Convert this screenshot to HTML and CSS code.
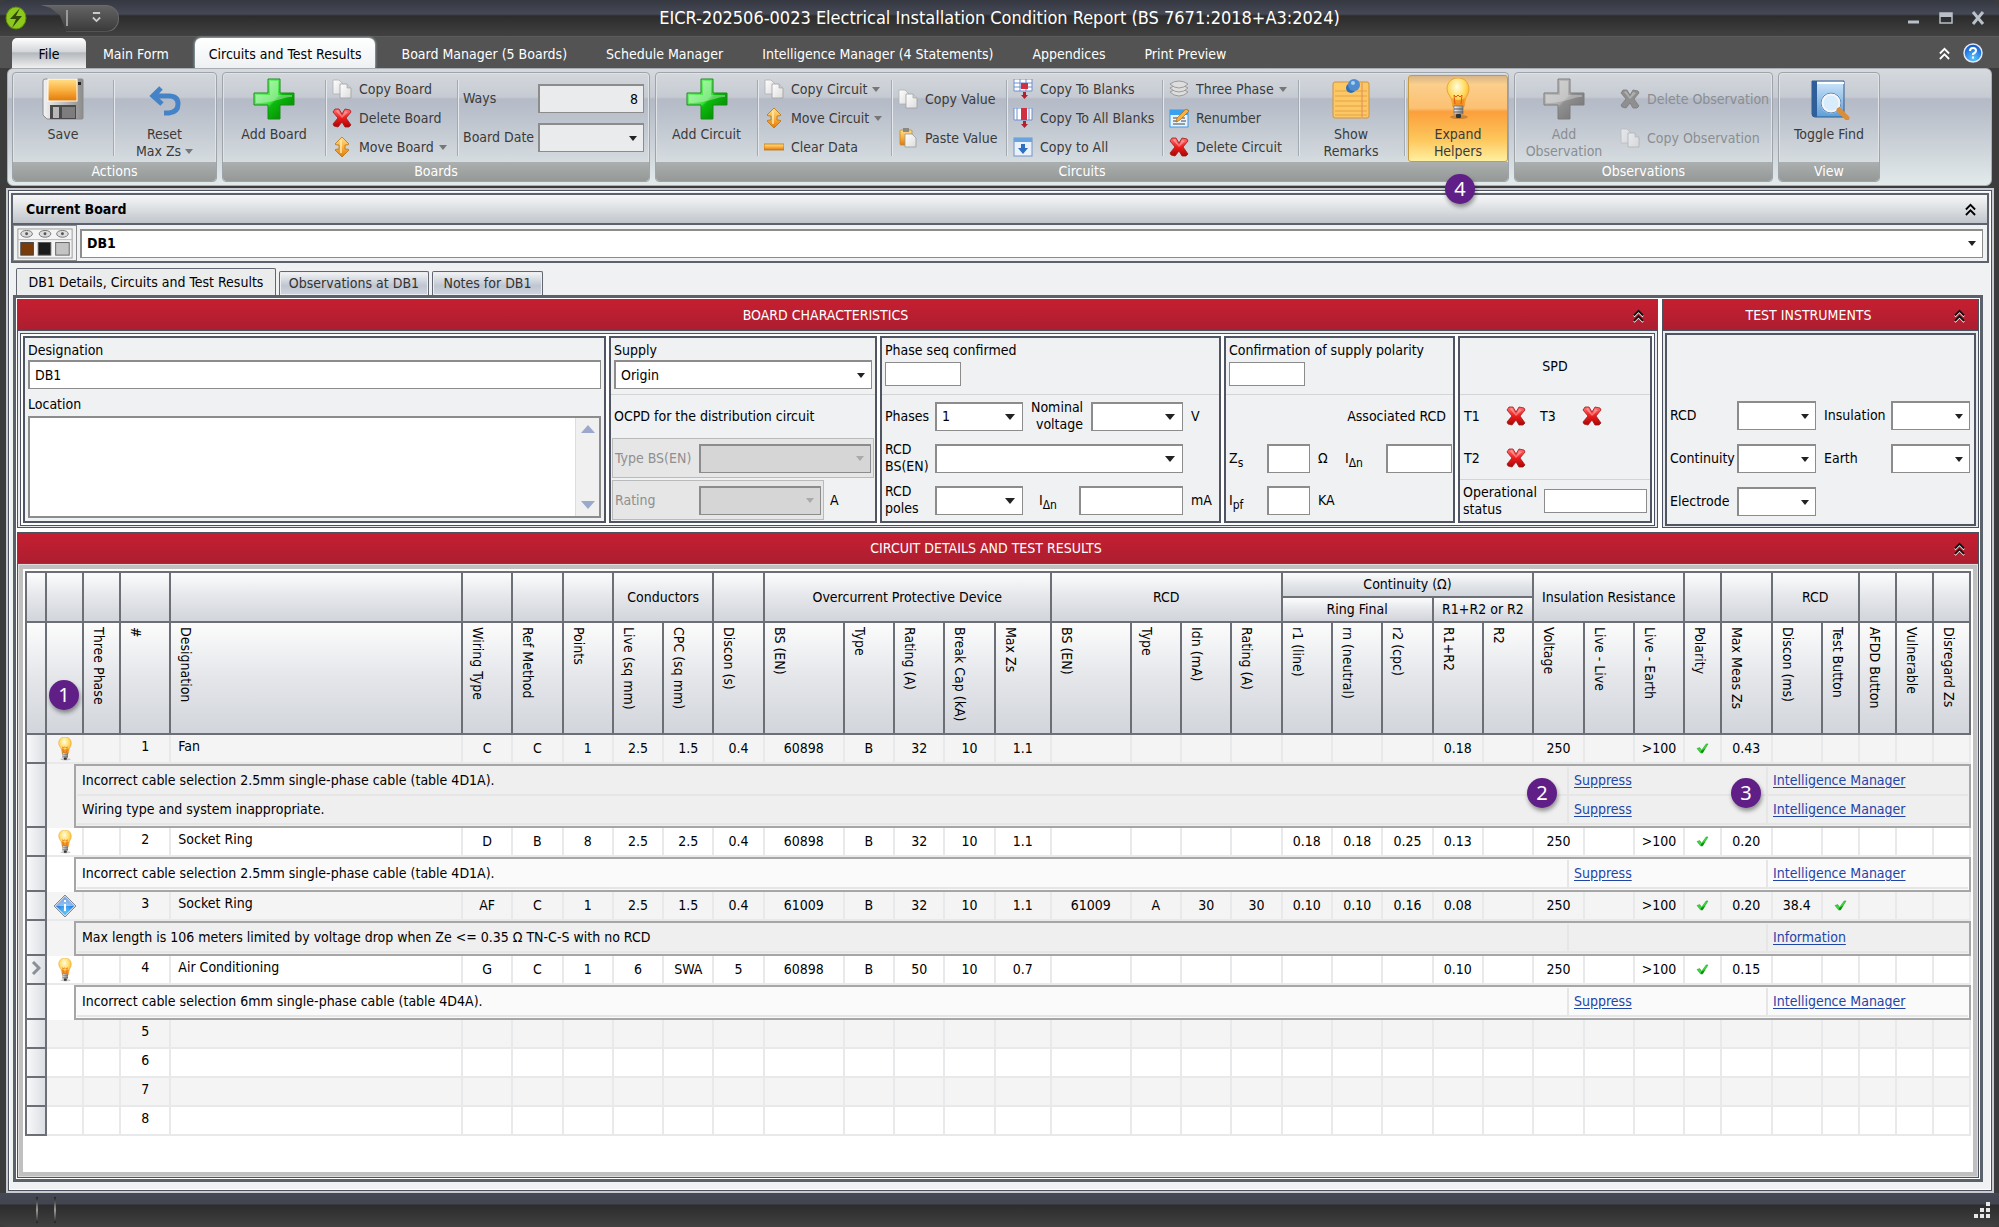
FILE: index.html
```html
<!DOCTYPE html>
<html lang="en">
<head>
    <meta charset="UTF-8">
    <meta name="viewport" content="width=device-width, initial-scale=1.0">
    <title>EICR-202506-0023 Electrical Installation Condition Report</title>
    <link rel="stylesheet" href="styles.css">
</head>
<body>
    <!-- icon set -->
    <svg class="icon-defs" width="0" height="0">
        <defs>
            <linearGradient id="gGreen" x1="0" y1="0" x2="1" y2="1"><stop offset="0" stop-color="#8dff8d"/><stop offset=".5" stop-color="#3fe03f"/><stop offset=".55" stop-color="#0cba0c"/><stop offset="1" stop-color="#007a00"/></linearGradient>
            <linearGradient id="gGrey" x1="0" y1="0" x2="1" y2="1"><stop offset="0" stop-color="#c4c4c4"/><stop offset=".5" stop-color="#acacac"/><stop offset=".55" stop-color="#8f8f8f"/><stop offset="1" stop-color="#6f6f6f"/></linearGradient>
            <linearGradient id="gRed" x1="0" y1="0" x2="0" y2="1"><stop offset="0" stop-color="#ff7474"/><stop offset=".5" stop-color="#ee1c1c"/><stop offset="1" stop-color="#a80606"/></linearGradient>
            <linearGradient id="gGold" x1="0" y1="0" x2="0" y2="1"><stop offset="0" stop-color="#ffe08a"/><stop offset=".5" stop-color="#fbb040"/><stop offset="1" stop-color="#e07a08"/></linearGradient>
            <linearGradient id="gPage" x1="0" y1="0" x2="1" y2="1"><stop offset="0" stop-color="#ffffff"/><stop offset="1" stop-color="#dcdcdc"/></linearGradient>
            <linearGradient id="gBlue" x1="0" y1="0" x2="0" y2="1"><stop offset="0" stop-color="#cfe6fa"/><stop offset="1" stop-color="#5d9fd8"/></linearGradient>
            <linearGradient id="gMetal" x1="0" y1="0" x2="1" y2="0"><stop offset="0" stop-color="#f4f4f4"/><stop offset="1" stop-color="#8c8c8c"/></linearGradient>
            <radialGradient id="gBulb" cx=".45" cy=".3" r=".8"><stop offset="0" stop-color="#fffde0"/><stop offset=".5" stop-color="#ffd95a"/><stop offset="1" stop-color="#f08a10"/></radialGradient>
            <radialGradient id="gHelp" cx=".5" cy=".8" r=".8"><stop offset="0" stop-color="#5ac8ff"/><stop offset="1" stop-color="#0a4ed0"/></radialGradient>
        </defs>
        <symbol id="i-plus" viewBox="0 0 42 42"><path d="M15 1h12v14h14v12H27v14H15V27H1V15h14z" fill="url(#gGreen)" stroke="#1a8a1a"/><path d="M17 3h8v14h14v2C28 19 24 25 3 25v-8h14z" fill="#fff" opacity=".35"/></symbol>
        <symbol id="i-plus-grey" viewBox="0 0 42 42"><path d="M15 1h12v14h14v12H27v14H15V27H1V15h14z" fill="url(#gGrey)" stroke="#7c7c7c"/><path d="M17 3h8v14h14v2C28 19 24 25 3 25v-8h14z" fill="#fff" opacity=".3"/></symbol>
        <symbol id="i-save" viewBox="0 0 42 42"><path d="M1 3q0-2 2-2h37q1 0 1 1v38q0 1-1 1H5l-4-4z" fill="url(#gMetal)" stroke="#8a8a8a"/><rect x="6" y="1" width="29" height="22" fill="url(#gGold)" stroke="#fff"/><rect x="8" y="27" width="26" height="14" fill="#4a4a4a"/><rect x="11" y="29" width="6" height="11" fill="#b8b8b8"/><rect x="20" y="29" width="13" height="11" fill="#7d7d7d"/><rect x="36" y="4" width="3" height="3" fill="#222"/></symbol>
        <symbol id="i-undo" viewBox="0 0 34 30"><path d="M13 2L5 10l9 8M6 10h15q9 0 9 8t-9 9h-5" fill="none" stroke="#4583c8" stroke-width="5"/></symbol>
        <symbol id="i-copy" viewBox="0 0 20 20"><path d="M1 1h6l4 4v10H1z" fill="url(#gPage)" stroke="#b0b0b0" stroke-width=".8"/><path d="M8 5h7l4 4v10H8z" fill="url(#gPage)" stroke="#a0a0a0" stroke-width=".8"/><path d="M15 5v4h4" fill="#ccc" stroke="#a0a0a0" stroke-width=".6"/></symbol>
        <symbol id="i-paste" viewBox="0 0 20 20"><rect x="2" y="2" width="12" height="15" rx="1" fill="url(#gGold)" stroke="#b98a3a" stroke-width=".8"/><rect x="5" y="0" width="6" height="4" fill="#888"/><path d="M7 6h7l4 4v9H7z" fill="url(#gPage)" stroke="#999" stroke-width=".8"/></symbol>
        <symbol id="i-x" viewBox="0 0 20 20"><path d="M3 1h4l3 5 3-5 5 1 1 2-5 6 5 7-2 2h-4l-3-5-4 5-4-1-1-2 5-6-5-6z" fill="url(#gRed)" stroke="#a31515" stroke-width=".8"/><path d="M4 3l2-1 4 6 3-5 3 1-6 6z" fill="#fff" opacity=".35"/></symbol>
        <symbol id="i-x-grey" viewBox="0 0 20 20"><path d="M3 1h4l3 5 3-5 5 1 1 2-5 6 5 7-2 2h-4l-3-5-4 5-4-1-1-2 5-6-5-6z" fill="#8f8f8f" stroke="#7c7c7c" stroke-width=".8"/><path d="M4 3l2-1 4 6 3-5 3 1-6 6z" fill="#fff" opacity=".3"/></symbol>
        <symbol id="i-move" viewBox="0 0 20 20"><path d="M10 0l7 7q0 1-4 1v4q4 0 4 1l-7 7-7-7q0-1 4-1V8q-4 0-4-1z" fill="url(#gGold)" stroke="#b87410" stroke-width=".8"/><path d="M9 3v13" stroke="#fff0b8" stroke-width="2" opacity=".7"/></symbol>
        <symbol id="i-minus" viewBox="0 0 20 20"><rect x="0" y="7" width="20" height="6" fill="url(#gGold)" stroke="#b87410" stroke-width=".8"/></symbol>
        <symbol id="i-blanks" viewBox="0 0 20 20"><path d="M1 0h18v12H1z" fill="#fff" stroke="#6f8fd0"/><path d="M7 0v12M13 0v12M1 4h18M1 8h18" stroke="#6f8fd0"/><rect x="8" y="4" width="7" height="6" fill="#d03040"/><path d="M10 13h3v3h2l-3.500 4L8 16h2z" fill="#b02030"/></symbol>
        <symbol id="i-allblanks" viewBox="0 0 20 20"><path d="M1 0h18v12H1z" fill="#fff" stroke="#6f8fd0"/><path d="M4 0v12M16 0v12" stroke="#6f8fd0"/><rect x="8" y="0" width="6" height="12" fill="#d03040"/><path d="M10 13h3v3h2l-3.500 4L8 16h2z" fill="#b02030"/></symbol>
        <symbol id="i-toall" viewBox="0 0 20 20"><rect x="1" y="1" width="18" height="18" fill="#e9f1fb" stroke="#7494c4"/><rect x="1" y="1" width="18" height="4" fill="#6aa4e0"/><path d="M8 7h4v4h3l-5 6-5-6h3z" fill="#2f6fc0"/></symbol>
        <symbol id="i-layers" viewBox="0 0 20 20"><g fill="#dedede" stroke="#8c8c8c" stroke-width=".8"><path d="M1 13q4-3 9-3t9 3q-4 4-9 4t-9-4z"/><path d="M1 9q4-3 9-3t9 3q-4 4-9 4T1 9z"/><path d="M1 5q4-3 9-3t9 3q-4 4-9 4T1 5z"/></g></symbol>
        <symbol id="i-renumber" viewBox="0 0 20 20"><rect x="1" y="2" width="18" height="17" fill="#e8f3fd" stroke="#3a9ae8"/><rect x="1" y="2" width="18" height="5" fill="#3aa0f0"/><path d="M4 10h5M4 13h5M4 16h12M12 13h5M13 10h3" stroke="#444"/><path d="M7 14l1-4 9-9 3 2-9 9z" fill="#fbb040" stroke="#a86a10" stroke-width=".7"/></symbol>
        <symbol id="i-note" viewBox="0 0 42 42"><rect x="3" y="4" width="36" height="36" rx="2" fill="#fcc765" stroke="#d3923a"/><path d="M5 13h32M5 18h32M5 23h32M5 28h32M5 33h32M5 37h32" stroke="#e5a443"/><path d="M32 5v34" stroke="#e58a60"/><circle cx="21" cy="10" r="5" fill="#2f6fb8"/><circle cx="24" cy="7" r="6" fill="#4f8dd0"/><circle cx="23" cy="5" r="2" fill="#a8d0f4"/></symbol>
        <symbol id="i-bulb" viewBox="0 0 24 42"><ellipse cx="13" cy="39" rx="9" ry="2" fill="#000" opacity=".2"/><path d="M12 0c7 0 11 5 11 11 0 5-3 7-4 12l-1 6H7l-1-6C5 18 1 16 1 11 1 5 5 0 12 0z" fill="url(#gBulb)" stroke="#e79a2b" stroke-width=".8"/><path d="M6 20q6 4 13 0l-2 8H8z" fill="#f07a10" opacity=".6"/><path d="M9 26l-1-9 2 2 2-2 2 2 2-2-1 9" fill="none" stroke="#e05a10"/><rect x="8" y="28" width="9" height="8" fill="url(#gMetal)" stroke="#666" stroke-width=".6"/><path d="M8 31h9M8 34h9" stroke="#555"/><rect x="10" y="36" width="5" height="4" rx="1" fill="#333"/></symbol>
        <symbol id="i-find" viewBox="0 0 42 42"><path d="M4 3h32v36H7q-3 0-3-3z" fill="url(#gBlue)" stroke="#2c5c92"/><path d="M4 3h5v36q-5 0-5-3z" fill="#2f5f98"/><path d="M9 5h27" stroke="#fff" stroke-width="2"/><circle cx="23" cy="25" r="9" fill="#d8ecfb" stroke="#f2f6fa" stroke-width="3"/><circle cx="23" cy="25" r="10" fill="none" stroke="#5a88b8" stroke-width="1"/><path d="M31 32l8 8" stroke="#d98e3c" stroke-width="5" stroke-linecap="round"/></symbol>
        <symbol id="i-tick" viewBox="0 0 14 12"><path d="M1 6l3-1 2 3 5-7 2 0-6 10H5z" fill="#3fd83f" stroke="#0c9a0c" stroke-width=".5"/><path d="M5 9l1 2h1l3-5z" fill="#0a8a0a"/></symbol>
        <symbol id="i-info" viewBox="0 0 24 24"><path d="M12 1l11 11-11 11L1 12z" fill="#cfd8df" stroke="#7c8a96"/><path d="M12 3l9 9-9 9-9-9z" fill="url(#gHelp)"/><path d="M12 3l9 9H3z" fill="#fff" opacity=".45"/><path d="M12 6v2M12 10v7" stroke="#fff" stroke-width="2"/></symbol>
        <symbol id="i-chev2" viewBox="0 0 12 14"><path d="M1 7l5-5 5 5M1 13l5-5 5 5" fill="none" stroke="currentColor" stroke-width="2"/></symbol>
        <symbol id="i-bolt" viewBox="0 0 22 24"><ellipse cx="11" cy="12" rx="10" ry="11" fill="#8fc81c" stroke="#5a8a10"/><path d="M15 2L5 13h6L7 22l10-12h-6z" fill="#2f4a08"/></symbol>
        <symbol id="i-help" viewBox="0 0 20 20"><circle cx="10" cy="10" r="9" fill="url(#gHelp)" stroke="#dfe8f5" stroke-width="1.500"/><path d="M7 8q0-3 3-3t3 2.500q0 2-3 3.500v1M10 13.500v2" fill="none" stroke="#fff" stroke-width="2"/></symbol>
        <symbol id="i-board" viewBox="0 0 58 32"><rect x="1" y="1" width="56" height="30" fill="#f4f4f4" stroke="#9a9a9a"/><path d="M1 12h56" stroke="#b8b8b8"/><g fill="#ddd" stroke="#777"><ellipse cx="10" cy="6" rx="6" ry="3.500"/><ellipse cx="29" cy="6" rx="6" ry="3.500"/><ellipse cx="47" cy="6" rx="6" ry="3.500"/></g><g fill="#555"><circle cx="10" cy="6" r="1.500"/><circle cx="29" cy="6" r="1.500"/><circle cx="47" cy="6" r="1.500"/></g><rect x="4" y="15" width="13" height="13" fill="#7a3c08" stroke="#444"/><rect x="22" y="15" width="13" height="13" fill="#1c1c1c" stroke="#555"/><rect x="40" y="15" width="14" height="13" fill="#c4c4c4" stroke="#666"/></symbol>
    </svg>

    <div class="window">
        <header class="title-bar">
            <svg class="app-icon"><use href="#i-bolt"/></svg>
            <div class="quick-access">
                <span class="qa-divider"></span>
                <button class="qa-btn" aria-label="Customise toolbar"><svg width="9" height="11" viewBox="0 0 10 12"><path d="M1 1h8M1 6l4 4 4-4" fill="none" stroke="#ccc" stroke-width="2"/></svg></button>
            </div>
            <h1 class="window-title">EICR-202506-0023 Electrical Installation Condition Report (BS 7671:2018+A3:2024)</h1>
            <div class="window-buttons">
                <button aria-label="Minimise"><svg width="14" height="14" viewBox="0 0 14 14"><path d="M1 11h11" stroke="#b8c0ca" stroke-width="3"/></svg></button>
                <button aria-label="Maximise"><svg width="14" height="14" viewBox="0 0 14 14"><path d="M1 2h12v10H1z" fill="none" stroke="#b8c0ca" stroke-width="1.500"/><path d="M1 4h12" stroke="#b8c0ca" stroke-width="4"/></svg></button>
                <button aria-label="Close"><svg width="14" height="14" viewBox="0 0 14 14"><path d="M2 1l10 12M12 1L2 13" stroke="#b8c0ca" stroke-width="3"/></svg></button>
            </div>
        </header>

        <nav class="ribbon-tabs">
            <button class="ribbon-tab file-tab">File</button>
            <button class="ribbon-tab tab-form">Main Form</button>
            <button class="ribbon-tab active">Circuits and Test Results</button>
            <button class="ribbon-tab">Board Manager (5 Boards)</button>
            <button class="ribbon-tab">Schedule Manager</button>
            <button class="ribbon-tab">Intelligence Manager (4 Statements)</button>
            <button class="ribbon-tab">Appendices</button>
            <button class="ribbon-tab">Print Preview</button>
            <div class="ribbon-tools">
                <svg class="chev"><use href="#i-chev2"/></svg>
                <svg class="help-icon"><use href="#i-help"/></svg>
            </div>
        </nav>

        <section class="ribbon">
            <div class="ribbon-group">
                <div class="group-body cols-actions">
                    <button class="big-btn"><svg class="ico-big"><use href="#i-save"/></svg><span>Save</span></button>
                    <button class="big-btn divided"><svg class="ico-big undo"><use href="#i-undo"/></svg><span>Reset<br>Max Zs <i class="arrow"></i></span></button>
                </div>
                <div class="group-caption">Actions</div>
            </div>

            <div class="ribbon-group">
                <div class="group-body cols-boards">
                    <button class="big-btn"><svg class="ico-big"><use href="#i-plus"/></svg><span>Add Board</span></button>
                    <div class="btn-col divided">
                        <button><svg><use href="#i-copy"/></svg>Copy Board</button>
                        <button><svg><use href="#i-x"/></svg>Delete Board</button>
                        <button><svg><use href="#i-move"/></svg>Move Board <i class="arrow"></i></button>
                    </div>
                    <div class="field-col divided">
                        <label for="ways">Ways</label><input id="ways" class="ribbon-input" value="8">
                        <label for="boardDate">Board Date</label><select id="boardDate" class="ribbon-input"><option></option></select>
                    </div>
                </div>
                <div class="group-caption">Boards</div>
            </div>

            <div class="ribbon-group">
                <div class="group-body cols-circuits">
                    <button class="big-btn"><svg class="ico-big"><use href="#i-plus"/></svg><span>Add Circuit</span></button>
                    <div class="btn-col divided">
                        <button><svg><use href="#i-copy"/></svg>Copy Circuit <i class="arrow"></i></button>
                        <button><svg><use href="#i-move"/></svg>Move Circuit <i class="arrow"></i></button>
                        <button><svg><use href="#i-minus"/></svg>Clear Data</button>
                    </div>
                    <div class="btn-col two divided">
                        <button><svg><use href="#i-copy"/></svg>Copy Value</button>
                        <button><svg><use href="#i-paste"/></svg>Paste Value</button>
                    </div>
                    <div class="btn-col divided">
                        <button><svg><use href="#i-blanks"/></svg>Copy To Blanks</button>
                        <button><svg><use href="#i-allblanks"/></svg>Copy To All Blanks</button>
                        <button><svg><use href="#i-toall"/></svg>Copy to All</button>
                    </div>
                    <div class="btn-col divided">
                        <button><svg><use href="#i-layers"/></svg>Three Phase <i class="arrow"></i></button>
                        <button><svg><use href="#i-renumber"/></svg>Renumber</button>
                        <button><svg><use href="#i-x"/></svg>Delete Circuit</button>
                    </div>
                    <button class="big-btn divided"><svg class="ico-big"><use href="#i-note"/></svg><span>Show<br>Remarks</span></button>
                    <div class="helpers-cell divided">
                        <button class="big-btn pressed"><svg class="ico-big"><use href="#i-bulb"/></svg><span>Expand<br>Helpers</span></button>
                        <span class="callout callout-ribbon">4</span>
                    </div>
                </div>
                <div class="group-caption">Circuits</div>
            </div>

            <div class="ribbon-group">
                <div class="group-body cols-observations">
                    <button class="big-btn" disabled><svg class="ico-big"><use href="#i-plus-grey"/></svg><span>Add<br>Observation</span></button>
                    <div class="btn-col two">
                        <button disabled><svg><use href="#i-x-grey"/></svg>Delete Observation</button>
                        <button disabled><svg class="faded"><use href="#i-copy"/></svg>Copy Observation</button>
                    </div>
                </div>
                <div class="group-caption">Observations</div>
            </div>

            <div class="ribbon-group">
                <div class="group-body cols-view">
                    <button class="big-btn"><svg class="ico-big"><use href="#i-find"/></svg><span>Toggle Find</span></button>
                </div>
                <div class="group-caption">View</div>
            </div>
        </section>

        <main class="client">
            <section class="current-board">
                <div class="current-board-head">
                    <h2>Current Board</h2>
                    <svg class="chev"><use href="#i-chev2"/></svg>
                </div>
                <div class="current-board-body">
                    <div class="board-pic"><svg><use href="#i-board"/></svg></div>
                    <select class="board-select" aria-label="Current board"><option>DB1</option></select>
                </div>
            </section>

            <div class="page-tabs">
                <button class="page-tab selected">DB1 Details, Circuits and Test Results</button>
                <button class="page-tab">Observations at DB1</button>
                <button class="page-tab">Notes for DB1</button>
            </div>

            <div class="page-body">
                <div class="top-panels">
                    <section class="panel">
                        <div class="panel-head"><h3>BOARD CHARACTERISTICS</h3><svg class="chev"><use href="#i-chev2"/></svg></div>
                        <div class="panel-body">
                            <div class="box box-designation">
                                <label class="top-label" for="designation">Designation</label>
                                <input id="designation" value="DB1">
                                <label class="mid-label" for="location">Location</label>
                                <div class="memo">
                                    <textarea id="location"></textarea>
                                    <div class="memo-scroll">
                                        <svg width="14" height="8" viewBox="0 0 14 8"><path d="M0 8l7-8 7 8z" fill="#9aa8cc"/></svg>
                                        <svg width="14" height="8" viewBox="0 0 14 8"><path d="M0 0l7 8 7-8z" fill="#9aa8cc"/></svg>
                                    </div>
                                </div>
                            </div>

                            <div class="box box-supply">
                                <div class="box-top">
                                    <label class="top-label" for="supply">Supply</label>
                                    <select id="supply"><option>Origin</option></select>
                                </div>
                                <div class="line">OCPD for the distribution circuit</div>
                                <div class="line"><div class="disabled-field"><label for="ocpdType">Type BS(EN)</label><select id="ocpdType" disabled><option></option></select></div></div>
                                <div class="line"><div class="disabled-field rating"><label for="ocpdRating">Rating</label><select id="ocpdRating" disabled><option></option></select></div><span class="unit">A</span></div>
                            </div>

                            <div class="box box-phase">
                                <div class="box-top">
                                    <label class="top-label" for="phaseSeq">Phase seq confirmed</label>
                                    <input id="phaseSeq" class="small-input">
                                </div>
                                <div class="line phase-line">
                                    <label for="phases">Phases</label><select id="phases"><option>1</option></select>
                                    <label class="nominal" for="nominal">Nominal voltage</label><select id="nominal"><option></option></select><span>V</span>
                                </div>
                                <div class="line phase-line">
                                    <label for="rcdBs">RCD BS(EN)</label><select id="rcdBs" class="wide"><option></option></select>
                                </div>
                                <div class="line phase-line poles-line">
                                    <label for="rcdPoles">RCD poles</label><select id="rcdPoles"><option></option></select>
                                    <label class="idn" for="phaseIdn">I<sub>Δn</sub></label><input id="phaseIdn"><span>mA</span>
                                </div>
                            </div>

                            <div class="box box-polarity">
                                <div class="box-top">
                                    <label class="top-label" for="polarity">Confirmation of supply polarity</label>
                                    <input id="polarity" class="small-input">
                                </div>
                                <div class="line line-right">Associated RCD</div>
                                <div class="line zs-line">
                                    <label for="zs">Z<sub>s</sub></label><input id="zs"><span>Ω</span>
                                    <label for="rcdIdn">I<sub>Δn</sub></label><input id="rcdIdn">
                                </div>
                                <div class="line zs-line">
                                    <label for="ipf">I<sub>pf</sub></label><input id="ipf"><span>KA</span>
                                </div>
                            </div>

                            <div class="box box-spd">
                                <div class="box-top spd-title">SPD</div>
                                <div class="line spd-line">
                                    <span>T1</span><button aria-label="T1"><svg><use href="#i-x"/></svg></button>
                                    <span>T3</span><button aria-label="T3"><svg><use href="#i-x"/></svg></button>
                                </div>
                                <div class="line spd-line">
                                    <span>T2</span><button aria-label="T2"><svg><use href="#i-x"/></svg></button>
                                </div>
                                <div class="line spd-status">
                                    <label for="opStatus">Operational status</label><input id="opStatus" class="small-input">
                                </div>
                            </div>
                        </div>
                    </section>

                    <section class="panel instruments">
                        <div class="panel-head"><h3>TEST INSTRUMENTS</h3><svg class="chev"><use href="#i-chev2"/></svg></div>
                        <div class="instruments-body">
                            <label for="tiRcd">RCD</label><select id="tiRcd"><option></option></select>
                            <label class="second" for="tiIns">Insulation</label><select id="tiIns"><option></option></select>
                            <label for="tiCont">Continuity</label><select id="tiCont"><option></option></select>
                            <label class="second" for="tiEarth">Earth</label><select id="tiEarth"><option></option></select>
                            <label for="tiElec">Electrode</label><select id="tiElec"><option></option></select>
                        </div>
                    </section>
                </div>

                <section class="panel results">
                    <div class="panel-head"><h3>CIRCUIT DETAILS AND TEST RESULTS</h3><svg class="chev"><use href="#i-chev2"/></svg></div>
                    <div class="grid-frame">
                        <table class="circuits">
                            <colgroup>
                                <col class="c-ind"><col class="c-narrow"><col class="c-narrow"><col><col class="c-name">
                                <col><col><col><col><col><col>
                                <col class="c-bs"><col><col><col><col class="c-zs">
                                <col class="c-bs"><col><col><col>
                                <col><col><col><col><col><col><col><col>
                                <col class="c-narrow"><col><col>
                                <col class="c-narrow"><col class="c-narrow"><col class="c-narrow"><col class="c-narrow">
                            </colgroup>
                            <thead>
                                <tr class="band">
                                    <th rowspan="2"></th><th rowspan="2"></th><th rowspan="2"></th><th rowspan="2"></th><th rowspan="2"></th><th rowspan="2"></th><th rowspan="2"></th><th rowspan="2"></th>
                                    <th rowspan="2" colspan="2">Conductors</th>
                                    <th rowspan="2"></th>
                                    <th rowspan="2" colspan="5">Overcurrent Protective Device</th>
                                    <th rowspan="2" colspan="4">RCD</th>
                                    <th colspan="5">Continuity (Ω)</th>
                                    <th rowspan="2" colspan="3">Insulation Resistance</th>
                                    <th rowspan="2"></th><th rowspan="2"></th>
                                    <th rowspan="2" colspan="2">RCD</th>
                                    <th rowspan="2"></th><th rowspan="2"></th><th rowspan="2"></th>
                                </tr>
                                <tr class="band">
                                    <th colspan="3">Ring Final</th>
                                    <th colspan="2">R1+R2 or R2</th>
                                </tr>
                                <tr class="heads" id="heads"></tr>
                            </thead>
                            <tbody id="circuitRows"></tbody>
                        </table>
                    </div>
                </section>
            </div>
        </main>

        <footer class="status-bar">
            <span class="status-sep"></span><span class="status-sep"></span>
            <svg class="grip" width="18" height="18" viewBox="0 0 18 18"><g fill="#e8e8e8"><rect x="13" y="1" width="4" height="4"/><rect x="7" y="7" width="4" height="4"/><rect x="13" y="7" width="4" height="4"/><rect x="1" y="13" width="4" height="4"/><rect x="7" y="13" width="4" height="4"/><rect x="13" y="13" width="4" height="4"/></g></svg>
        </footer>
    </div>
    <script src="script.js"></script>
</body>
</html>
```
FILE: script.js
```js
const heads = ['', '', 'Three Phase', '#', 'Designation', 'Wiring Type', 'Ref Method', 'Points',
    'Live (sq mm)', 'CPC (sq mm)', 'Discon (s)', 'BS (EN)', 'Type', 'Rating (A)', 'Break Cap (kA)', 'Max Zs',
    'BS (EN)', 'Type', 'Idn (mA)', 'Rating (A)', 'r1 (line)', 'rn (neutral)', 'r2 (cpc)', 'R1+R2', 'R2',
    'Voltage', 'Live - Live', 'Live - Earth', 'Polarity', 'Max Meas Zs', 'Discon (ms)', 'Test Button',
    'AFDD Button', 'Vulnerable', 'Disregard Zs'];

// values run from Wiring Type to Disregard Zs, "y" is a tick
const circuits = [
    { name: 'Fan', icon: 'bulb', values: 'C|C|1|2.5|1.5|0.4|60898|B|32|10|1.1||||||||0.18||250||>100|y|0.43|||||',
      notes: [['Incorrect cable selection 2.5mm single-phase cable (table 4D1A).', 'Suppress', 'Intelligence Manager', 2, 3],
              ['Wiring type and system inappropriate.', 'Suppress', 'Intelligence Manager']] },
    { name: 'Socket Ring', icon: 'bulb', values: 'D|B|8|2.5|2.5|0.4|60898|B|32|10|1.1|||||0.18|0.18|0.25|0.13||250||>100|y|0.20|||||',
      notes: [['Incorrect cable selection 2.5mm single-phase cable (table 4D1A).', 'Suppress', 'Intelligence Manager']] },
    { name: 'Socket Ring', icon: 'info', values: 'AF|C|1|2.5|1.5|0.4|61009|B|32|10|1.1|61009|A|30|30|0.10|0.10|0.16|0.08||250||>100|y|0.20|38.4|y|||',
      notes: [['Max length is 106 meters limited by voltage drop when Ze <= 0.35 Ω TN-C-S with no RCD', '', 'Information']] },
    { name: 'Air Conditioning', icon: 'bulb', current: true, values: 'G|C|1|6|SWA|5|60898|B|50|10|0.7||||||||0.10||250||>100|y|0.15|||||',
      notes: [['Incorrect cable selection 6mm single-phase cable (table 4D4A).', 'Suppress', 'Intelligence Manager']] },
    {}, {}, {}, {}
];

function esc(text) {
    return text.replace(/</g, '&lt;').replace(/>/g, '&gt;');
}

function link(text) {
    return text ? `<a href="#">${text}</a>` : '';
}

function callout(n, extra) {
    return n ? `<span class="callout ${extra}">${n}</span>` : '';
}

document.getElementById('heads').innerHTML = heads.map((head, i) =>
    `<th>${head ? `<span class="vertical">${head}</span>` : ''}${i === 1 ? callout(1, 'callout-head') : ''}</th>`).join('');

let html = '';
circuits.forEach((circuit, i) => {
    const shade = i % 2 === 0 ? 'odd' : 'even';
    const values = circuit.values ? circuit.values.split('|') : Array(30).fill('');
    const icon = circuit.icon ? `<svg class="row-icon"><use href="#i-${circuit.icon}"/></svg>` : '';
    const pointer = circuit.current ? '<svg width="10" height="14" viewBox="0 0 10 14"><path d="M2 1l6 6-6 6" fill="none" stroke="#8a8f98" stroke-width="3"/></svg>' : '';
    html += `<tr class="circuit ${shade}"><td class="indicator">${pointer}</td><td>${icon}</td><td></td>
        <td class="num">${i + 1}</td><td class="name">${circuit.name || ''}</td>`;
    values.forEach(value => {
        html += `<td>${value === 'y' ? '<svg class="tick"><use href="#i-tick"/></svg>' : esc(value)}</td>`;
    });
    html += '</tr>';

    if (circuit.notes) {
        html += `<tr class="detail ${shade}"><td class="indicator"></td><td colspan="34"><div class="notes">`;
        circuit.notes.forEach(([text, suppress, target, a, b]) => {
            html += `<div class="note"><span>${esc(text)}</span>
                <span>${callout(a, 'callout-suppress')}${link(suppress)}</span>
                <span>${callout(b, 'callout-manager')}${link(target)}</span></div>`;
        });
        html += '</div></td></tr>';
    }
});
document.getElementById('circuitRows').innerHTML = html;
```
FILE: styles.css
```css
* {
    box-sizing: border-box;
}

body {
    margin: 0;
    font-family: "DejaVu Sans Condensed", "DejaVu Sans", Tahoma, sans-serif;
    font-size: 14px;
    line-height: 17px;
    color: #000;
    background-color: #3c3c3c;
}

button, input, select, textarea {
    font: inherit;
    color: inherit;
}

button {
    border: none;
    background: none;
    padding: 0;
    margin: 0;
}

h1, h2, h3 {
    margin: 0;
    font-weight: normal;
    font-size: 14px;
}

.icon-defs {
    position: absolute;
}

.window {
    min-height: 100vh;
    display: flex;
    flex-direction: column;
    border-radius: 8px;
    overflow: hidden;
}

.chev {
    width: 11px;
    height: 13px;
}

.arrow {
    display: inline-block;
    border: 4px solid transparent;
    border-top: 5px solid #777;
    border-bottom: none;
    vertical-align: 2px;
}

/* Title bar */
.title-bar {
    height: 37px;
    display: flex;
    align-items: center;
    background: linear-gradient(#353841, #454955 14px, #2c2c2c 16px, #414141);
    border-bottom: 1px solid #5c5c5c;
    padding: 0 14px 0 5px;
}

.app-icon {
    width: 22px;
    height: 24px;
}

.quick-access {
    width: 80px;
    height: 27px;
    margin-left: 12px;
    display: flex;
    align-items: center;
    justify-content: space-between;
    padding: 0 17px 0 27px;
    background: linear-gradient(#636363, #3b3b3b);
    border: 1px solid #6a6a6a;
    border-left: none;
    border-radius: 0 13px 13px 0;
    clip-path: polygon(0 0, 100% 0, 100% 100%, 34% 100%, 26% 40%, 14% 12%);
}

.qa-divider {
    width: 2px;
    height: 16px;
    background-color: #999;
}

.window-title {
    flex: 1;
    text-align: center;
    font-size: 18px;
    line-height: 24px;
    color: #fff;
}

.window-buttons {
    width: 105px;
    display: flex;
    justify-content: flex-end;
    gap: 18px;
}

.window-buttons svg {
    display: block;
}

/* Ribbon tabs */
.ribbon-tabs {
    height: 31px;
    display: flex;
    align-items: stretch;
    background-color: #535353;
    padding: 1px 16px 0 12px;
}

.ribbon-tab {
    color: #fff;
    padding: 3px 14px 0;
    margin-right: 11px;
    white-space: nowrap;
}

.ribbon-tab.file-tab {
    width: 74px;
    margin-right: 3px;
    color: #000;
    background: linear-gradient(#fff, #d4d6da 45%, #b4b8bc 50%, #f0f0f0);
    border-radius: 5px 5px 0 0;
}

.ribbon-tab.tab-form {
    margin-right: 12px;
}

.ribbon-tab.active {
    color: #000;
    background: linear-gradient(#fff, #eef1f3);
    border-radius: 6px 6px 0 0;
    box-shadow: 0 0 3px #c8f4fa;
    margin-right: 12px;
}

.ribbon-tools {
    margin-left: auto;
    display: flex;
    align-items: center;
    gap: 13px;
    color: #fff;
}

.help-icon {
    width: 20px;
    height: 20px;
}

/* Ribbon */
.ribbon {
    display: flex;
    gap: 5px;
    margin: 0 7px;
    padding: 3px 4px;
    height: 118px;
    background: linear-gradient(#d6dade, #c6cbd3 24%, #b4bac6 26%, #c8ced5 60%, #e2eaeb 100%);
    border: 1px solid #a9aeb4;
    border-radius: 6px;
    color: #3a3a3a;
}

.ribbon-group {
    display: flex;
    flex-direction: column;
    border: 1px solid #9fa4aa;
    border-radius: 4px;
    box-shadow: inset 0 0 0 1px #dfe3e6;
}

.group-body {
    flex: 1;
    display: grid;
    padding-top: 2px;
}

.cols-actions { grid-template-columns: 100px 103px; }
.cols-boards { grid-template-columns: 102px 132px 192px; }
.cols-circuits { grid-template-columns: 101px 134px 115px 156px 136px 106px 104px; }
.cols-observations { grid-template-columns: 98px 159px; }
.cols-view { grid-template-columns: 100px; }

.group-caption {
    height: 19px;
    line-height: 19px;
    text-align: center;
    color: #fff;
    background: linear-gradient(#abafaf, #949896);
    border-radius: 0 0 4px 4px;
}

.divided {
    background: linear-gradient(#a4aab2, #a4aab2) 0 5px / 1px 76px no-repeat, linear-gradient(#e4e8ec, #e4e8ec) 1px 5px / 1px 76px no-repeat;
}

.big-btn {
    display: flex;
    flex-direction: column;
    align-items: center;
    gap: 6px;
    padding-top: 3px;
}

.ico-big {
    width: 42px;
    height: 42px;
}

.ico-big.undo {
    width: 34px;
    padding-top: 4px;
}

.big-btn:disabled, .btn-col button:disabled {
    color: #8a8e92;
}

.btn-col {
    display: flex;
    flex-direction: column;
    justify-content: space-between;
    padding: 2px 0 3px 7px;
}

.btn-col.two {
    padding: 12px 0 12px 7px;
}

.btn-col button {
    display: flex;
    align-items: center;
    height: 24px;
    white-space: nowrap;
}

.btn-col svg {
    width: 20px;
    height: 20px;
    margin-right: 7px;
}

.btn-col .arrow {
    margin-left: 5px;
}

.faded {
    opacity: 0.6;
}

.field-col {
    display: grid;
    grid-template-columns: 70px 106px;
    grid-auto-rows: 29px;
    gap: 10px 5px;
    align-items: center;
    align-content: start;
    padding: 9px 0 0 6px;
    white-space: nowrap;
}

.field-col .ribbon-input {
    height: 29px;
    background-color: #e9ebec;
    text-align: right;
    color: #000;
}

.helpers-cell {
    position: relative;
    padding: 0 0 0 4px;
}

.pressed {
    width: 100%;
    height: 87px;
    border: 1px solid #c89a3c;
    border-radius: 3px;
    background: linear-gradient(#d6b588, #fbcf8c 10%, #fcc072 38%, #fb9f3c 42%, #fdc75c 75%, #fff0a0);
    padding-top: 2px;
}

.callout {
    position: absolute;
    width: 30px;
    height: 30px;
    border-radius: 50%;
    background-color: #5f1f86;
    color: #fff;
    font-family: "Noto Sans", sans-serif;
    font-size: 20px;
    line-height: 30px;
    text-align: center;
    box-shadow: 1px 3px 4px rgba(0, 0, 0, 0.4);
}

.callout-ribbon {
    left: 41px;
    bottom: -42px;
    z-index: 2;
}

/* Form controls */
input, select, textarea {
    border: 2px solid #8c8c8c;
    border-right-width: 1px;
    border-bottom-width: 1px;
    border-radius: 0;
    background-color: #fff;
    height: 29px;
    padding: 0 5px;
    min-width: 0;
    width: 100%;
}

select {
    appearance: none;
    background-image: url("data:image/svg+xml,%3Csvg xmlns='http://www.w3.org/2000/svg' width='8' height='5'%3E%3Cpath d='M0 0h8L4 5z' fill='%23222'/%3E%3C/svg%3E");
    background-repeat: no-repeat;
    background-position: right 6px center;
}

/* Client area */
.client {
    flex: 1;
    display: flex;
    flex-direction: column;
    margin: 4px 7px 2px 8px;
    border: 1px solid #4c5260;
    box-shadow: inset 0 0 0 1px #fff, 0 0 0 2px #c9cbd0;
    background-color: #eff1f3;
    padding: 2px 2px 8px;
}

.current-board {
    border: 2px solid #5c616c;
}

.current-board-head {
    height: 30px;
    display: flex;
    align-items: center;
    justify-content: space-between;
    padding: 0 11px 0 13px;
    background: linear-gradient(#f6f7f8, #dcdfe2 50%, #c0c5cd);
    border-bottom: 2px solid #5c616c;
}

.current-board-head h2 {
    font-weight: bold;
}

.current-board-body {
    display: flex;
    align-items: center;
    gap: 3px;
    height: 36px;
    padding-right: 4px;
}

.board-pic {
    width: 64px;
    height: 36px;
    padding: 2px;
    border: 1px solid #8c8c8c;
}

.board-pic svg {
    display: block;
    width: 58px;
    height: 31px;
}

.board-select {
    flex: 1;
    font-weight: bold;
}

.page-tabs {
    display: flex;
    align-items: flex-end;
    gap: 3px;
    padding: 5px 0 0 5px;
}

.page-tab {
    height: 24px;
    width: 150px;
    color: #333;
    border: 1px solid #62666e;
    border-bottom: none;
    border-radius: 2px 2px 0 0;
    background: linear-gradient(#f4f5f6, #bfc6d1 60%, #d0d6de);
    box-shadow: inset 0 0 0 1px #eceef0;
    white-space: nowrap;
}

.page-tab:last-child {
    width: 111px;
}

.page-tab.selected {
    height: 27px;
    width: 260px;
    color: #000;
    background: #ebecec;
}

.page-body {
    flex: 1;
    display: flex;
    flex-direction: column;
    gap: 4px;
    margin: 0 6px 0 2px;
    padding: 1px;
    border: 3px solid #5b616b;
    background-color: #fff;
}

.top-panels {
    display: flex;
    gap: 4px;
}

.panel {
    border: 1px solid #4c5260;
    background-color: #e8ebee;
}

.top-panels .panel:first-child {
    flex: 1;
}

.panel-head {
    height: 31px;
    display: flex;
    align-items: center;
    padding: 0 13px;
    background: linear-gradient(#c51f31, #ad1e30);
    border-bottom: 1px solid #4c5260;
    color: #fff;
}

.panel-head h3 {
    flex: 1;
    margin-right: 13px;
    text-align: center;
}

.panel-head .chev {
    color: #111;
    filter: drop-shadow(0 1px 0 #fff);
}

.panel-body {
    display: grid;
    grid-template-columns: minmax(0, 1fr) 268px 341px 231px 194px;
    gap: 3px;
    margin: 2px 2px 1px;
    padding: 2px;
    border: 1px solid #4c5260;
    background-color: #fff;
}

.box {
    height: 187px;
    border: 2px solid #4f5562;
    background-color: #eff1f3;
    padding: 0 3px;
}

.top-label {
    display: block;
    padding-top: 4px;
    height: 22px;
}

.mid-label {
    display: block;
    height: 27px;
    padding-top: 7px;
}

.memo {
    display: flex;
    height: 102px;
    border: 2px solid #8c8c8c;
    background-color: #fff;
}

.memo textarea {
    flex: 1;
    height: auto;
    border: none;
    resize: none;
}

.memo-scroll {
    width: 24px;
    display: flex;
    flex-direction: column;
    justify-content: space-between;
    align-items: center;
    padding: 7px 0;
    background-color: #f0f0f0;
    border-left: 1px solid #ddd;
}

.box-top {
    height: 57px;
    border-bottom: 1px solid #d2d4d6;
    margin: 0 -3px;
    padding: 0 3px;
}

.line {
    display: flex;
    align-items: center;
    height: 42px;
}

.small-input {
    width: 76px;
    height: 24px;
    border-width: 1px;
    margin-top: 2px;
}

.disabled-field {
    display: flex;
    align-items: center;
    height: 40px;
    width: 264px;
    margin: 0 -2px;
    padding: 0 2px;
    border: 1px solid #b8babc;
    background-color: #e6e6e6;
    color: #8f8f8f;
    white-space: nowrap;
}

.disabled-field label {
    width: 84px;
    flex: none;
}

.disabled-field select {
    background-color: #d6d6d6;
    background-image: url("data:image/svg+xml,%3Csvg xmlns='http://www.w3.org/2000/svg' width='8' height='5'%3E%3Cpath d='M0 0h8L4 5z' fill='%23aaa'/%3E%3C/svg%3E");
    opacity: 1;
}

.disabled-field.rating {
    width: 212px;
}

.unit {
    margin-left: 8px;
}

.phase-line {
    display: grid;
    grid-template-columns: 42px 88px 52px 92px 24px;
    column-gap: 8px;
}

.phase-line > label:first-child {
    width: 56px;
}

.phase-line select {
    background-size: 10px 6px;
    background-position: right 7px center;
}

.phase-line .nominal {
    text-align: right;
}

.phase-line .wide {
    grid-column: 2 / 5;
}

.phase-line.poles-line {
    grid-template-columns: 42px 88px 40px 104px 24px;
}

.poles-line .idn {
    padding-left: 8px;
}

sub {
    font-size: 12px;
    line-height: 0;
}

.line-right {
    justify-content: flex-end;
    padding-right: 4px;
}

.zs-line {
    display: grid;
    grid-template-columns: 38px 43px 35px 41px 66px;
}

.zs-line span {
    padding-left: 8px;
}

.spd-title {
    display: flex;
    align-items: center;
    justify-content: center;
}

.spd-line {
    display: grid;
    grid-template-columns: 42px 34px 42px 34px;
    padding-left: 1px;
}

.spd-line svg {
    display: block;
    width: 20px;
    height: 20px;
}

.spd-status {
    border-top: 1px solid #d2d4d6;
    margin: 0 -3px;
    padding: 0 3px;
    justify-content: space-between;
}

.spd-status label {
    width: 78px;
}

.spd-status .small-input {
    width: 103px;
    margin-top: 0;
}

.instruments {
    width: 317px;
    display: flex;
    flex-direction: column;
}

.instruments-body {
    flex: 1;
    display: grid;
    grid-template-columns: 67px 79px 75px 79px;
    grid-auto-rows: 29px;
    align-content: end;
    align-items: center;
    gap: 14px 0;
    margin: 2px 2px 1px;
    padding: 0 0 8px 3px;
    border: 2px solid #4f5562;
    background-color: #eff1f3;
}

.instruments-body .second {
    padding-left: 8px;
}

/* Circuits grid */
.results {
    flex: 1;
    display: flex;
    flex-direction: column;
}

.grid-frame {
    flex: 1;
    margin: 1px;
    border: 4px solid #c0c0c0;
    outline: 1px solid #dcdcdc;
    background-color: #fff;
    padding: 2px 2px 0;
}

.circuits {
    width: 100%;
    table-layout: fixed;
    border-collapse: separate;
    border-spacing: 0;
    border-left: 2px solid #6c6f76;
    border-top: 2px solid #6c6f76;
}

.circuits .c-ind { width: 20px; }
.circuits .c-narrow { width: 37px; }
.circuits .c-bs { width: 80px; }
.circuits .c-zs { width: 56px; }
.circuits .c-name { width: 15%; }

.circuits th {
    font-weight: normal;
    padding: 0;
    border-right: 2px solid #6c6f76;
    border-bottom: 2px solid #6c6f76;
    background: linear-gradient(#fcfcfc, #e4e6ea 50%, #d2d5db);
    white-space: nowrap;
}

.band th {
    height: 25px;
}

.heads th {
    position: relative;
    height: 112px;
    vertical-align: top;
    text-align: left;
    padding: 4px 0 0 6px;
}

.vertical {
    display: block;
    writing-mode: vertical-rl;
}

.callout-head {
    left: 2px;
    top: 57px;
}

.circuit td {
    height: 29px;
    padding: 0;
    text-align: center;
    border-right: 2px solid #e8e9ea;
    border-bottom: 2px solid #e8e9ea;
    white-space: nowrap;
}

.odd td { background-color: #f4f4f4; }
.even td { background-color: #fff; }

.circuits td.indicator {
    background: linear-gradient(90deg, #f7f8f9, #dcdfe3);
    border-right: 2px solid #6c6f76;
    border-bottom: 2px solid #6c6f76;
}

.circuit td.num, .circuit td.name {
    vertical-align: top;
    padding-top: 3px;
}

.circuit td.name {
    text-align: left;
    padding-left: 7px;
}

.row-icon {
    display: block;
    margin: 0 auto;
    width: 24px;
    height: 24px;
}

.tick {
    display: block;
    margin: 0 auto;
    width: 13px;
    height: 11px;
}

.detail td {
    padding: 0 0 0 27px;
}

.detail td.indicator {
    padding: 0;
}

.notes {
    border: 2px solid #a6a6a6;
    padding: 1px;
    background-color: #fafafa;
}

.odd .notes {
    background-color: #efefef;
}

.note {
    display: grid;
    grid-template-columns: minmax(0, 1fr) 199px 202px;
    line-height: 27px;
    border-bottom: 2px solid #e6e6e6;
}

.note > span {
    position: relative;
    padding-left: 5px;
}

.note > span + span {
    border-left: 2px solid #e6e6e6;
}

.note a {
    color: #1f45a8;
    text-underline-offset: 2px;
}

.callout-suppress {
    left: -42px;
    top: 11px;
}

.callout-manager {
    left: -37px;
    top: 11px;
}

/* Status bar */
.status-bar {
    height: 34px;
    display: flex;
    align-items: center;
    gap: 16px;
    padding: 0 8px 0 36px;
    background: linear-gradient(#454955, #42454f 11px, #2c2c2c 12px, #414141);
}

.status-sep {
    width: 2px;
    height: 26px;
    background: linear-gradient(#222, #999, #222);
}

.grip {
    margin-left: auto;
}
```
